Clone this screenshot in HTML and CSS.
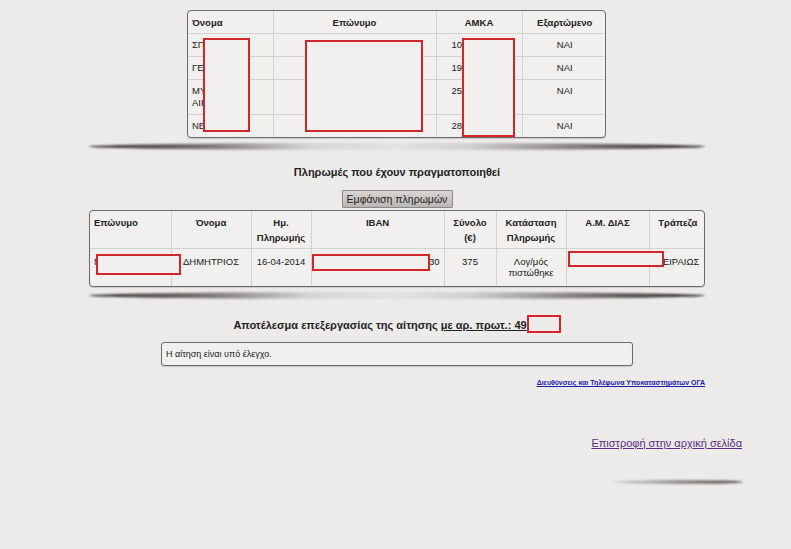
FILE: index.html
```html
<!DOCTYPE html>
<html lang="el">
<head>
    <meta charset="UTF-8">
    <title>Αποτέλεσμα αίτησης</title>
    <link rel="stylesheet" href="styles.css">
</head>
<body>
    <div class="page">
        <div class="box members">
            <table class="grid">
                <colgroup>
                    <col style="width:85px"><col style="width:163px"><col style="width:86px"><col style="width:85px">
                </colgroup>
                <thead>
                    <tr>
                        <th class="left">Όνομα</th>
                        <th>Επώνυμο</th>
                        <th>ΑΜΚΑ</th>
                        <th>Εξαρτώμενο</th>
                    </tr>
                </thead>
                <tbody>
                    <tr><td>ΣΠ</td><td></td><td class="amka">10</td><td class="center">ΝΑΙ</td></tr>
                    <tr><td>ΓΕ</td><td></td><td class="amka">19</td><td class="center">ΝΑΙ</td></tr>
                    <tr><td>ΜΥ<br>ΑΙΚ</td><td></td><td class="amka">25</td><td class="center">ΝΑΙ</td></tr>
                    <tr><td>ΝΕ</td><td></td><td class="amka">28</td><td class="center">ΝΑΙ</td></tr>
                </tbody>
            </table>
            <div class="redact r-name"></div>
            <div class="redact r-surname"></div>
            <div class="redact r-amka"></div>
        </div>
        <div class="shadow"></div>

        <h2 class="section-title">Πληρωμές που έχουν πραγματοποιηθεί</h2>
        <div class="button-row">
            <button type="button" class="show-button">Εμφάνιση πληρωμών</button>
        </div>

        <div class="box payments">
            <table class="grid">
                <colgroup>
                    <col style="width:81px"><col style="width:80px"><col style="width:60px"><col style="width:133px">
                    <col style="width:52px"><col style="width:70px"><col style="width:83px"><col style="width:57px">
                </colgroup>
                <thead>
                    <tr>
                        <th class="left">Επώνυμο</th>
                        <th>Όνομα</th>
                        <th>Ημ.<br>Πληρωμής</th>
                        <th>IBAN</th>
                        <th>Σύνολο<br>(€)</th>
                        <th>Κατάσταση<br>Πληρωμής</th>
                        <th>Α.Μ. ΔΙΑΣ</th>
                        <th>Τράπεζα</th>
                    </tr>
                </thead>
                <tbody>
                    <tr>
                        <td>Ν</td>
                        <td class="center">ΔΗΜΗΤΡΙΟΣ</td>
                        <td class="center">16-04-2014</td>
                        <td class="right">30</td>
                        <td class="center">375</td>
                        <td class="center">Λογ/μός<br>πιστώθηκε</td>
                        <td></td>
                        <td class="center">ΠΕΙΡΑΙΩΣ</td>
                    </tr>
                </tbody>
            </table>
            <div class="redact r-pay-surname"></div>
            <div class="redact r-iban"></div>
            <div class="redact r-dias"></div>
        </div>
        <div class="shadow"></div>

        <h2 class="result-title">Αποτέλεσμα επεξεργασίας της αίτησης <span class="protocol">με αρ. πρωτ.: 49</span><span class="redact-inline"></span></h2>

        <div class="message">Η αίτηση είναι υπό έλεγχο.</div>

        <div class="branches">
            <a href="#">Διευθύνσεις και Τηλέφωνα Υποκαταστημάτων ΟΓΑ</a>
        </div>
    </div>

    <div class="back">
        <a href="#" class="visited">Επιστροφή στην αρχική σελίδα</a>
    </div>
    <div class="shadow small"></div>
</body>
</html>
```

FILE: styles.css
```css
/* Base */
* {
    margin: 0;
    padding: 0;
    box-sizing: border-box;
}

body {
    background-color: #ecebe9;
    font-family: 'Liberation Sans', Arial, sans-serif;
    color: #1a1a1a;
    width: 791px;
    height: 549px;
    overflow: hidden;
}

.page {
    width: 616px;
    margin-left: 89px;
}

/* Tables */
.box {
    position: relative;
    background-color: #f1f0ee;
    border: 1px solid #6d6c6a;
    border-radius: 4px;
    overflow: hidden;
    box-shadow: 0 1px 1px rgba(0, 0, 0, 0.15);
}

.members {
    width: 419px;
    margin: 10px 0 0 98px;
}

.payments {
    width: 616px;
    margin-top: 2px;
}

.grid {
    width: 100%;
    border-collapse: collapse;
    table-layout: fixed;
    font-size: 9.5px;
}

.grid th,
.grid td {
    border: 1px solid #d4d2cf;
    vertical-align: top;
}

.grid tr:first-child th {
    border-top: none;
}

.grid th:first-child,
.grid td:first-child {
    border-left: none;
}

.grid th:last-child,
.grid td:last-child {
    border-right: none;
}

.grid tbody tr:last-child td {
    border-bottom: none;
}

.grid th {
    font-weight: bold;
    text-align: center;
    color: #222;
}

.grid .left {
    text-align: left;
}

.grid .center {
    text-align: center;
}

.grid .right {
    text-align: right;
}

.members th {
    padding: 6px 4px 5px;
    line-height: 11px;
}

.members td {
    padding: 5px 4px 5px;
    line-height: 12px;
}

.members td.amka {
    padding-left: 15px;
}

.payments th {
    padding: 4px 4px 3px;
    line-height: 15px;
}

.payments td {
    padding: 7px 4px 8px;
    line-height: 11px;
}

/* Redaction boxes */
.redact {
    position: absolute;
    border: 2px solid #d3262b;
    background-color: #f1f0ee;
}

.r-name {
    left: 15px;
    top: 27px;
    width: 47px;
    height: 94px;
}

.r-surname {
    left: 117px;
    top: 29px;
    width: 118px;
    height: 92px;
}

.r-amka {
    left: 274px;
    top: 27px;
    width: 53px;
    height: 99px;
}

.r-pay-surname {
    left: 6px;
    top: 43px;
    width: 85px;
    height: 21px;
}

.r-iban {
    left: 222px;
    top: 43px;
    width: 118px;
    height: 17px;
}

.r-dias {
    left: 478px;
    top: 40px;
    width: 96px;
    height: 16px;
}

/* Shadows */
.shadow {
    height: 7px;
    margin: 5px 0 0;
    border-radius: 50%;
    background: linear-gradient(to right,
        rgba(35, 31, 28, 0.95) 0%,
        rgba(55, 51, 48, 0.6) 20%,
        rgba(90, 86, 82, 0.14) 36%,
        rgba(90, 86, 82, 0.05) 50%,
        rgba(90, 86, 82, 0.18) 62%,
        rgba(55, 51, 48, 0.65) 82%,
        rgba(35, 31, 28, 1) 100%);
    filter: blur(1.3px);
}

.shadow.small {
    width: 131px;
    height: 4px;
    margin: 30px 0 0 612px;
    background: linear-gradient(to right,
        rgba(90, 86, 82, 0.15) 0%,
        rgba(70, 66, 62, 0.6) 60%,
        rgba(50, 46, 42, 0.9) 100%);
}

/* Payments block */
.section-title {
    margin-top: 16px;
    text-align: center;
    font-size: 11px;
    line-height: 13px;
    font-weight: bold;
    color: #222;
}

.button-row {
    margin-top: 11px;
    text-align: center;
    font-size: 0;
}

.show-button {
    height: 18px;
    width: 111px;
    padding: 0;
    font-family: 'Liberation Sans', Arial, sans-serif;
    font-size: 10.5px;
    color: #222;
    background: linear-gradient(to bottom, #d8d5d2, #b9b6b3);
    border: 1px solid #8a8886;
    border-radius: 1px;
}

/* Result */
.result-title {
    margin-top: 16px;
    text-align: center;
    font-size: 11px;
    line-height: 16px;
    font-weight: bold;
    color: #222;
}

.protocol {
    text-decoration: underline;
}

.redact-inline {
    display: inline-block;
    width: 34px;
    height: 18px;
    border: 2px solid #d3262b;
    vertical-align: -4px;
}

.message {
    width: 472px;
    margin: 9px 0 0 72px;
    height: 24px;
    padding: 0 4px;
    line-height: 22px;
    font-size: 9px;
    border: 1px solid #6d6c6a;
    border-radius: 3px;
    background-color: #f1f0ee;
    box-shadow: 0 1px 1px rgba(0, 0, 0, 0.15);
}

.branches {
    margin-top: 12px;
    text-align: right;
    font-size: 7px;
    font-weight: bold;
    line-height: 10px;
}

.branches a {
    color: #1c1ca8;
}

.back {
    width: 742px;
    margin-top: 48px;
    text-align: right;
    font-size: 11px;
    line-height: 14px;
}

.back a {
    color: #5a2d82;
}
```
